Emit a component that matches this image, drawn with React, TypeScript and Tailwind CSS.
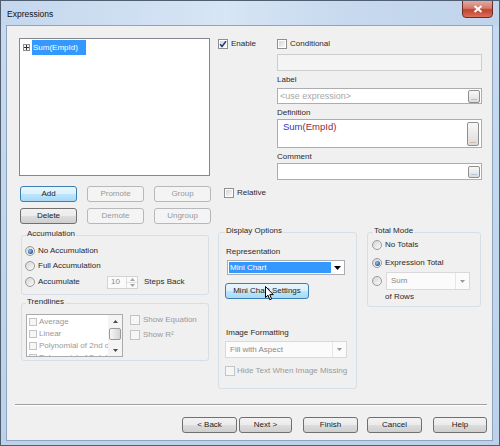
import React from 'react';

type Kind = 'normal' | 'focus' | 'disabled';

function Btn({ label, kind = 'normal', className = '', children }: { label: string; kind?: Kind; className?: string; children?: React.ReactNode }) {
  const look =
    kind === 'focus'
      ? 'border-[#3c7fb1] bg-[linear-gradient(#eaf6fd_0%,#d9f0fc_50%,#bee6fd_50%,#a7d9f5_100%)] text-[#222]'
      : kind === 'disabled'
        ? 'border-[#b5b9bc] bg-[#f4f4f4] text-[#999]'
        : 'border-[#707070] bg-[linear-gradient(#f2f2f2_0%,#ebebeb_50%,#dddddd_50%,#cfcfcf_100%)] text-[#222]';
  return (
    <div className={`relative flex h-[16px] shrink-0 items-center justify-center rounded-[3px] border ${look} ${className}`}>
      {label}
      {children}
    </div>
  );
}

function Check({ checked = false, disabled = false, small = false }: { checked?: boolean; disabled?: boolean; small?: boolean }) {
  const size = small ? 'h-[8px] w-[8px]' : 'h-[10px] w-[10px]';
  return (
    <span className={`relative flex shrink-0 items-center justify-center border ${size} ${disabled ? 'border-[#c4c4c4] bg-[#f6f6f6]' : 'border-[#8e8f8f] bg-white'}`}>
      {!disabled && <span className="absolute inset-[1px] bg-linear-to-br from-[#d3d5d8] to-[#f9f9f9]" />}
      {checked && (
        <svg className="relative" width="8" height="8" viewBox="0 0 8 8">
          <path d="M1 4.2 L3 6.4 L7 1.2" fill="none" stroke="#2b3f7c" strokeWidth="1.6" />
        </svg>
      )}
    </span>
  );
}

function Radio({ on = false }: { on?: boolean }) {
  return (
    <span className="flex h-[10px] w-[10px] shrink-0 items-center justify-center rounded-full border border-[#9a9b9b] bg-linear-to-br from-[#d2d4d7] to-[#fbfbfb]">
      {on && <span className="h-[5px] w-[5px] rounded-full bg-[radial-gradient(circle_at_40%_40%,#9cc8ee_0%,#2c66aa_60%,#1a4580_100%)]" />}
    </span>
  );
}

function Group({ title, titleClass, className, children }: { title: string; titleClass: string; className: string; children: React.ReactNode }) {
  return (
    <div className={`flex shrink-0 flex-col rounded-[3px] border border-[#d5dfe5] ${className}`}>
      <div className={`-mt-[7px] w-fit bg-[#f0f0f0] px-[1px] ${titleClass}`}>{title}</div>
      {children}
    </div>
  );
}

function Dots({ className }: { className: string }) {
  return (
    <span className={`flex w-[12px] shrink-0 items-end justify-center rounded-[2px] border border-[#8e8f8f] bg-[linear-gradient(#f8f8f8,#dcdcdc)] pb-[1px] text-[7px] leading-[7px] text-[#666] ${className}`}>
      ...
    </span>
  );
}

function SmallArrow({ color = '#7a7a7a', up = false }: { color?: string; up?: boolean }) {
  return (
    <svg width="5" height="3" viewBox="0 0 5 3">
      <path d={up ? 'M0 3 L2.5 0 L5 3 Z' : 'M0 0 L5 0 L2.5 3 Z'} fill={color} />
    </svg>
  );
}

function DisabledCombo({ text, className }: { text: string; className: string }) {
  return (
    <div className={`flex shrink-0 items-center border border-[#d9d9d9] bg-[#fbfbfb] ${className}`}>
      <span className="flex-1 pl-[4px] text-[#8a8a8a]">{text}</span>
      <span className="flex h-full w-[14px] items-center justify-center border-l border-[#e6e6e6]">
        <SmallArrow color="#9a9a9a" />
      </span>
    </div>
  );
}

function LeftColumn() {
  const trends = ['Average', 'Linear', 'Polynomial of 2nd degree', 'Polynomial of 3rd degree'];
  return (
    <div className="flex w-[204px] shrink-0 flex-col pl-[12px] pt-[12px]">
      <div className="h-[138px] w-[191px] border border-[#828790] bg-white pl-[3px] pt-[1px]">
        <div className="flex h-[15px] items-center">
          <span className="flex h-[7px] w-[7px] items-center justify-center border border-[#8f8f8f] bg-[#f4f4f4]">
            <svg width="5" height="5" viewBox="0 0 5 5">
              <path d="M0 2.5 H5 M2.5 0 V5" stroke="#333" strokeWidth="1" />
            </svg>
          </span>
          <span className="ml-[2px] flex h-[15px] w-[54px] items-center bg-[#3399ff] pl-[1px] text-white">Sum(EmpId)</span>
        </div>
      </div>

      <div className="mt-[10px] flex gap-[10px] pl-[1px]">
        <Btn label="Add" kind="focus" className="w-[57px]" />
        <Btn label="Promote" kind="disabled" className="w-[57px]" />
        <Btn label="Group" kind="disabled" className="w-[57px]" />
      </div>
      <div className="mt-[6px] flex gap-[10px] pl-[1px]">
        <Btn label="Delete" className="w-[57px]" />
        <Btn label="Demote" kind="disabled" className="w-[57px]" />
        <Btn label="Ungroup" kind="disabled" className="w-[57px]" />
      </div>

      <Group title="Accumulation" titleClass="ml-[4px]" className="ml-[2px] mt-[11px] h-[60px] w-[188px]">
        <div className="ml-[3px] mt-[6px] flex h-[12px] items-center gap-[3px]">
          <Radio on />
          <span>No Accumulation</span>
        </div>
        <div className="ml-[3px] mt-[3px] flex h-[12px] items-center gap-[3px]">
          <Radio />
          <span>Full Accumulation</span>
        </div>
        <div className="ml-[3px] mt-[4px] flex h-[12px] items-center">
          <Radio />
          <span className="ml-[3px] w-[69px]">Accumulate</span>
          <div className="flex h-[13px] w-[31px] shrink-0 items-center border border-[#d3d3d3] bg-[#fafafa]">
            <span className="flex-1 pl-[3px] text-[#8a8a8a]">10</span>
            <span className="flex h-full w-[11px] flex-col border-l border-[#e0e0e0]">
              <span className="flex flex-1 items-center justify-center border-b border-[#e0e0e0]">
                <SmallArrow up color="#a5a5a5" />
              </span>
              <span className="flex flex-1 items-center justify-center">
                <SmallArrow color="#a5a5a5" />
              </span>
            </span>
          </div>
          <span className="ml-[6px]">Steps Back</span>
        </div>
      </Group>

      <Group title="Trendlines" titleClass="ml-[4px]" className="ml-[2px] mt-[8px] h-[58px] w-[188px]">
        <div className="ml-[4px] mt-[7px] flex items-start">
          <div className="flex h-[43px] w-[97px] shrink-0 overflow-hidden border border-[#a9abaf] bg-white">
            <div className="w-[81px] overflow-hidden pt-[1px]">
              {trends.map((t) => (
                <div key={t} className="flex h-[12px] items-center gap-[2px] whitespace-nowrap pl-[2px] text-[#999]">
                  <Check small disabled />
                  <span>{t}</span>
                </div>
              ))}
            </div>
            <div className="flex w-[14px] shrink-0 flex-col bg-[#f4f4f4]">
              <span className="flex h-[12px] items-center justify-center">
                <SmallArrow up color="#4a4a4a" />
              </span>
              <span className="mx-[1px] mt-[1px] h-[12px] rounded-[2px] border border-[#9a9a9a] bg-[linear-gradient(to_right,#f7f7f7,#d4d4d4)]" />
              <span className="flex-1" />
              <span className="flex h-[12px] items-center justify-center">
                <SmallArrow color="#4a4a4a" />
              </span>
            </div>
          </div>
          <div className="ml-[7px] flex flex-col">
            <div className="mt-[1px] flex h-[10px] items-center gap-[3px] text-[#999]">
              <Check disabled />
              <span>Show Equation</span>
            </div>
            <div className="mt-[5px] flex h-[10px] items-center gap-[3px] text-[#999]">
              <Check disabled />
              <span>Show R²</span>
            </div>
          </div>
        </div>
      </Group>
    </div>
  );
}

function RightColumn() {
  return (
    <div className="flex flex-1 flex-col">
      <div className="ml-[7px] mt-[13px] flex items-start">
        <div className="flex h-[10px] w-[59px] shrink-0 items-center gap-[3px]">
          <Check checked />
          <span>Enable</span>
        </div>
        <div className="flex w-[205px] flex-col">
          <div className="flex h-[10px] items-center gap-[3px]">
            <Check />
            <span>Conditional</span>
          </div>
          <div className="mt-[5px] h-[17px] border border-[#cbcdd0] bg-[#f4f4f4]" />
          <div className="mt-[4px]">Label</div>
          <div className="mt-[3px] flex h-[16px] items-center border border-[#abadb3] bg-white">
            <span className="flex-1 pl-[2px] text-[9px] text-[#a8a8a8]">&lt;use expression&gt;</span>
            <Dots className="mr-[1px] h-[13px]" />
          </div>
          <div className="mt-[4px]">Definition</div>
          <div className="mt-[1px] flex h-[29px] items-start border border-[#abadb3] bg-white">
            <span className="flex-1 pl-[5px] pt-[1px] text-[9.5px] leading-[11px]">
              <span className="text-[#3535c8]">Sum</span>
              <span className="text-[#8c2a3c]">(EmpId)</span>
            </span>
            <Dots className="mr-[2px] mt-[2px] h-[24px]" />
          </div>
          <div className="mt-[4px]">Comment</div>
          <div className="mt-[1px] flex h-[17px] items-center border border-[#abadb3] bg-white">
            <span className="flex-1" />
            <Dots className="mr-[1px] h-[12px]" />
          </div>
        </div>
      </div>

      <div className="ml-[13px] mt-[8px] flex h-[10px] items-center gap-[3px]">
        <Check />
        <span>Relative</span>
      </div>

      <div className="ml-[7px] mt-[34px] flex items-start gap-[10px]">
        <Group title="Display Options" titleClass="ml-[6px]" className="h-[157px] w-[139px]">
          <div className="ml-[7px] mt-[11px]">Representation</div>
          <div className="ml-[8px] mt-[3px] flex h-[15px] w-[118px] items-stretch border border-[#abadb3] bg-white p-[1px]">
            <span className="flex flex-1 items-center bg-[#3399ff] pl-[1px] text-white">Mini Chart</span>
            <span className="flex w-[12px] items-center justify-center">
              <svg width="7" height="4" viewBox="0 0 7 4">
                <path d="M0 0 H7 L3.5 4 Z" fill="#000" />
              </svg>
            </span>
          </div>
          <Btn label="Mini Chart Settings" kind="focus" className="ml-[6px] mt-[8px] w-[84px]">
            <svg className="absolute left-[39px] top-[2px]" width="10" height="15" viewBox="0 0 10 15">
              <path d="M0.5 0.5 L0.5 11.5 L3 9.2 L4.8 13.8 L6.6 13 L4.8 8.6 L8.3 8.6 Z" fill="#fff" stroke="#000" strokeWidth="1" strokeLinejoin="round" />
            </svg>
          </Btn>
          <div className="ml-[7px] mt-[29px]">Image Formatting</div>
          <DisabledCombo text="Fill with Aspect" className="ml-[6px] mt-[3px] h-[17px] w-[122px]" />
          <div className="ml-[6px] mt-[8px] flex h-[10px] items-center gap-[2px] text-[#999]">
            <Check disabled />
            <span>Hide Text When Image Missing</span>
          </div>
        </Group>

        <Group title="Total Mode" titleClass="ml-[5px]" className="h-[75px] w-[114px]">
          <div className="ml-[4px] mt-[3px] flex h-[12px] items-center gap-[3px]">
            <Radio />
            <span>No Totals</span>
          </div>
          <div className="ml-[4px] mt-[6px] flex h-[12px] items-center gap-[3px]">
            <Radio on />
            <span>Expression Total</span>
          </div>
          <div className="ml-[4px] mt-[3px] flex h-[18px] items-center gap-[4px]">
            <Radio />
            <DisabledCombo text="Sum" className="h-[18px] w-[84px]" />
          </div>
          <div className="mt-[2px] pl-[17px]">of Rows</div>
        </Group>
      </div>
    </div>
  );
}

export default function App() {
  return (
    <div className="flex h-[446px] w-[500px] flex-col overflow-hidden border border-[#4f5e70] bg-linear-to-b from-[#c7daef] to-[#bdd2ea] font-['Liberation_Sans',Arial,sans-serif] text-[8px] leading-[10px] text-[#2a2a2a]">
      <div className="flex h-[25px] shrink-0 items-start bg-[linear-gradient(to_right,#c4d7ed,#d7e5f5_45%,#c6d9ee_70%,#c0d4eb)]">
        <span className="pl-[6px] pt-[8px] text-[8.5px] text-[#111]">Expressions</span>
        <div className="-mt-[1px] ml-auto mr-[6px] flex h-[18px] w-[31px] items-center justify-center rounded-b-[4px] border border-[#6e2c24] bg-[linear-gradient(#e4aa9d_0%,#d27a6a_45%,#c3412f_55%,#d9705a_100%)]">
          <svg width="10" height="8" viewBox="0 0 10 8">
            <path d="M1.5 1 L8.5 7 M8.5 1 L1.5 7" stroke="#fff" strokeWidth="2" />
          </svg>
        </div>
      </div>
      <div className="ml-[6px] flex h-[414px] w-[485px] shrink-0 flex-col bg-[#f0f0f0] shadow-[0_0_0_1px_#8ea4bf]">
        <div className="flex h-[378px] shrink-0">
          <LeftColumn />
          <RightColumn />
        </div>
        <div className="ml-[8px] h-[2px] w-[472px] border-t border-b border-t-[#a0a0a0] border-b-white" />
        <div className="mt-[11px] flex pl-[175px]">
          <Btn label="< Back" className="w-[55px]" />
          <Btn label="Next >" className="ml-[2px] w-[53px]" />
          <Btn label="Finish" className="ml-[11px] w-[55px]" />
          <Btn label="Cancel" className="ml-[9px] w-[55px]" />
          <Btn label="Help" className="ml-[11px] w-[54px]" />
        </div>
      </div>
    </div>
  );
}
